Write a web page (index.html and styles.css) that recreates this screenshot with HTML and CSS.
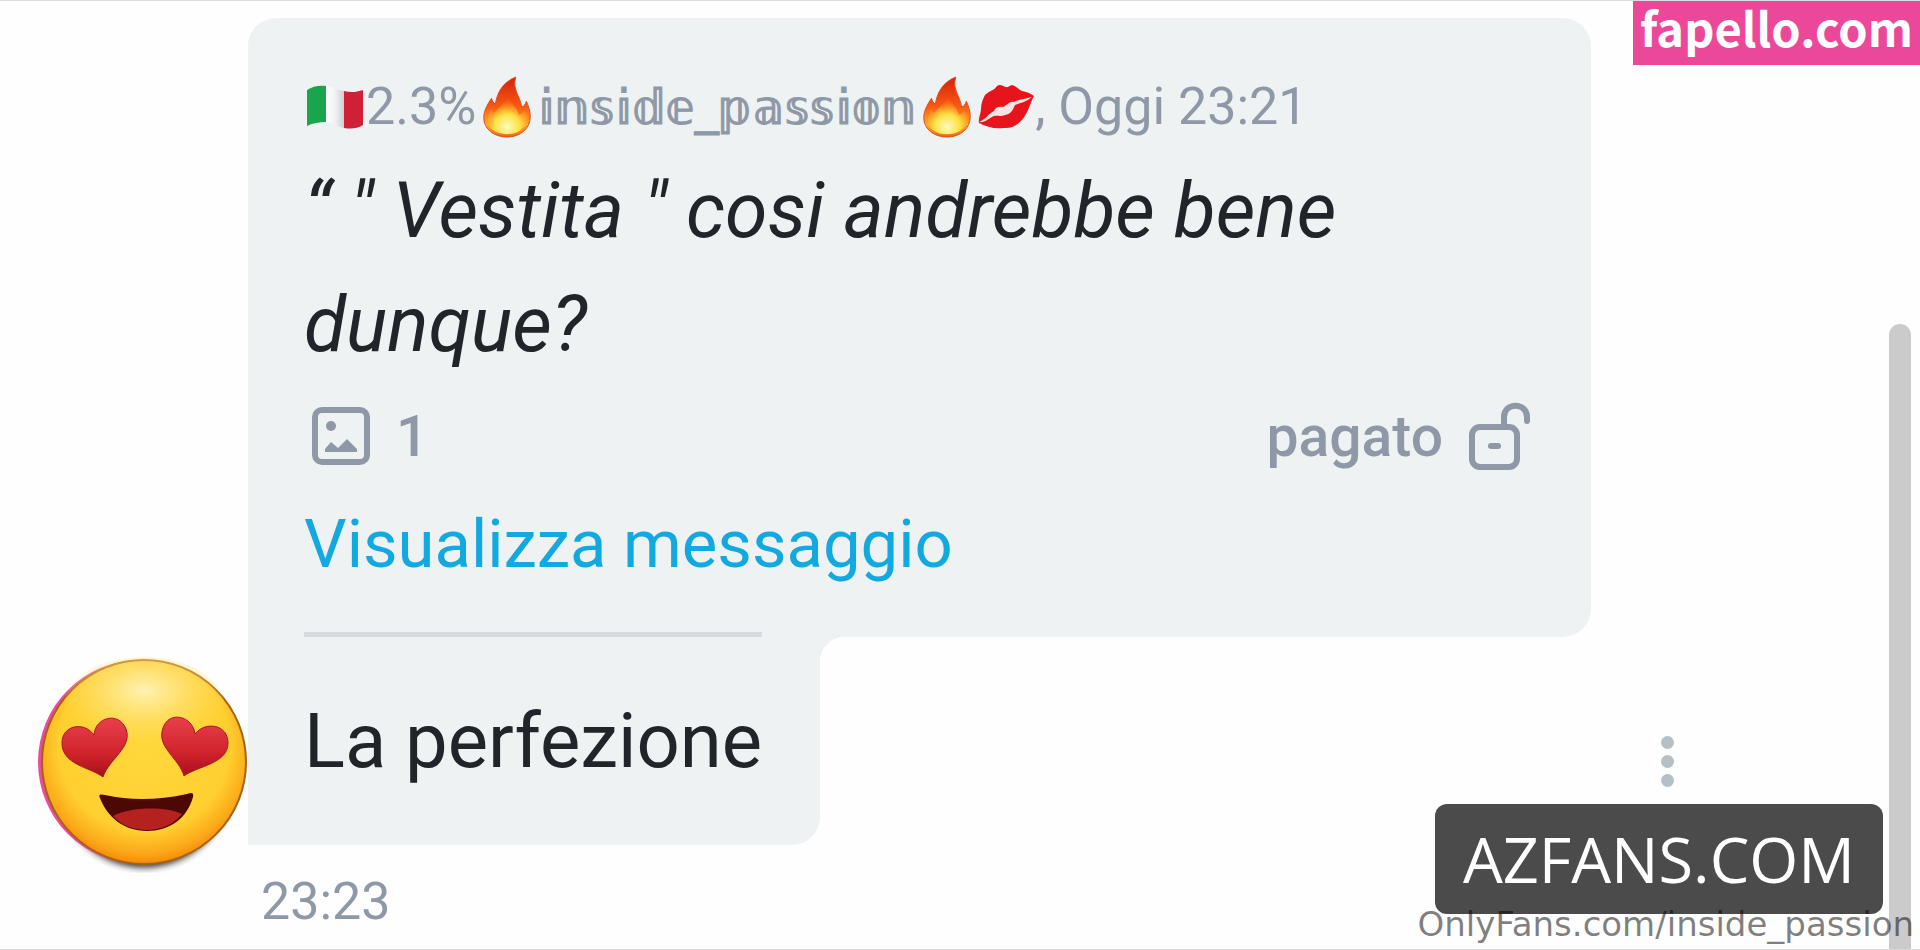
FILE: index.html
```
<!DOCTYPE html>
<html lang="it">
<head>
    <meta charset="UTF-8">
    <meta name="viewport" content="width=device-width, initial-scale=1.0">
    <title>Messaggi</title>
    <link rel="stylesheet" href="styles.css">
</head>
<body>
    <svg class="defs" width="0" height="0" aria-hidden="true">
        <defs>
            <linearGradient id="flameOuter" x1="0" y1="0" x2="0" y2="1">
                <stop offset="0" stop-color="#d5200c"/>
                <stop offset="0.5" stop-color="#fa5a12"/>
                <stop offset="0.8" stop-color="#fdae2c"/>
                <stop offset="1" stop-color="#e8641c"/>
            </linearGradient>
            <radialGradient id="flameInner" cx="0.5" cy="0.8" r="0.75">
                <stop offset="0" stop-color="#fffbc0"/>
                <stop offset="0.45" stop-color="#ffe040"/>
                <stop offset="1" stop-color="#fb7a14" stop-opacity="0"/>
            </radialGradient>
            <symbol id="fire" viewBox="0 0 50 64">
                <path d="M34 1C20 7 15 17 13 29C11 28 10 26 9 23C5 29 1 36 1 43C1 55 12 63 25 63C39 63 49 54 49 42C49 36 47 31 45 26C44 29 43 31 40 32C39 21 30 14 34 1Z" fill="url(#flameOuter)" stroke="#e2491f" stroke-width="1"/>
                <path d="M26 21C23 29 15 33 12 38C10 37 9 36 9 34C0 48 8 60 25 60C42 60 49 48 43 35C42 38 40 40 37 40C36 32 29 29 26 21Z" fill="url(#flameInner)"/>
            </symbol>
        </defs>
    </svg>

    <main class="chat">
        <div class="message">
            <svg class="avatar" viewBox="0 0 210 216" role="img" aria-label="Faccina con occhi a cuore">
                <defs>
                    <radialGradient id="face" cx="0.5" cy="0.42" r="0.6">
                        <stop offset="0" stop-color="#ffd83c"/>
                        <stop offset="0.7" stop-color="#ffcf30"/>
                        <stop offset="0.88" stop-color="#fba818"/>
                        <stop offset="1" stop-color="#f57c00"/>
                    </radialGradient>
                    <radialGradient id="shine" cx="0.5" cy="0.35" r="0.55">
                        <stop offset="0" stop-color="#fff3b4"/>
                        <stop offset="1" stop-color="#ffe070" stop-opacity="0"/>
                    </radialGradient>
                    <linearGradient id="heart" x1="0" y1="0" x2="0" y2="1">
                        <stop offset="0" stop-color="#e8404c"/>
                        <stop offset="0.6" stop-color="#d0232c"/>
                        <stop offset="1" stop-color="#a8101a"/>
                    </linearGradient>
                    <filter id="soft" x="-20%" y="-20%" width="140%" height="140%">
                        <feGaussianBlur stdDeviation="3"/>
                    </filter>
                </defs>
                <ellipse cx="106" cy="113" rx="92" ry="98" fill="#222" opacity="0.85" filter="url(#soft)"/>
                <circle cx="102" cy="105" r="102" fill="#ea4aa0"/>
                <circle cx="106" cy="105" r="102" fill="url(#face)" stroke="#a86212" stroke-width="2"/>
                <ellipse cx="106" cy="48" rx="80" ry="48" fill="url(#shine)"/>
                <path d="M65 120C52 110 24 108 24 86C24 68 46 64 56 78C57 60 81 54 88 72C95 90 71 102 65 120Z" fill="url(#heart)" stroke="#a81820" stroke-width="1"/>
                <path d="M146 119C159 109 190 107 190 86C190 67 167 64 157 77C155 59 131 53 125 71C118 90 141 101 146 119Z" fill="url(#heart)" stroke="#a81820" stroke-width="1"/>
                <path d="M62 141C60 137 63 137 67 138C93 144 121 143 149 137C154 135 156 136 155 140C149 162 131 174 109 174C86 174 69 160 62 141Z" fill="#4c0805"/>
                <path d="M75 159C91 150 127 149 144 157C135 168 123 173 109 173C95 173 83 168 75 159Z" fill="#b5211f"/>
            </svg>

            <div class="bubble">
                <article class="quote">
                    <p class="quote-author">
                        <svg class="flag" viewBox="0 0 58 44" role="img" aria-label="Italia">
                            <defs>
                                <linearGradient id="flagWhite" x1="0" y1="0" x2="1" y2="0">
                                    <stop offset="0" stop-color="#ffffff"/>
                                    <stop offset="0.5" stop-color="#f2f2f2"/>
                                    <stop offset="1" stop-color="#cfcfcf"/>
                                </linearGradient>
                            </defs>
                            <path d="M1 5C7 1 13 0 20 1V37C13 37 7 38 1 41Z" fill="#18a54b"/>
                            <path d="M20 1C27 2 32 5 38 6V43C32 42 27 38 20 37Z" fill="url(#flagWhite)"/>
                            <path d="M38 6C45 8 51 7 57 5V40C51 44 44 44 38 43Z" fill="#cf2035"/>
                        </svg><span>2.3%</span><svg class="fire" role="img" aria-label="Fuoco"><use href="#fire"/></svg><span class="double">𝕚𝕟𝕤𝕚𝕕𝕖_𝕡𝕒𝕤𝕤𝕚𝕠𝕟</span><svg class="fire" role="img" aria-label="Fuoco"><use href="#fire"/></svg><svg class="kiss" viewBox="0 0 58 48" role="img" aria-label="Bacio">
                            <path d="M8 12C13 7 17 8 20 3C24 0 27 5 31 4C36 0 39 4 43 7C47 9 52 9 57 13C54 18 53 24 49 31C44 40 37 46 26 45C17 46 10 44 2 40C1 35 4 31 4 26C4 20 6 16 8 12Z" fill="#e8141c"/>
                            <path d="M2 39C8 37 11 31 17 28C18 24 23 23 26 24C31 22 32 18 37 19C42 16 49 16 55 14C49 19 43 20 38 22C36 27 34 31 28 32C24 34 20 32 17 33C12 35 8 40 2 39Z" fill="#f6e3e4"/>
                        </svg><span>, Oggi 23:21</span>
                    </p>
                    <blockquote class="quote-text">“ " Vestita " cosi andrebbe bene dunque?</blockquote>
                    <div class="quote-meta">
                        <span class="media">
                            <svg class="icon" viewBox="0 0 58 58" role="img" aria-label="Immagini">
                                <rect x="3" y="3" width="52" height="52" rx="7" fill="none" stroke="currentColor" stroke-width="6"/>
                                <circle cx="19" cy="19" r="5" fill="currentColor"/>
                                <path d="M13 45V42L19 35L26 41L35 32L45 42V45Z" fill="currentColor"/>
                            </svg>
                            1
                        </span>
                        <span class="paid">
                            pagato
                            <svg class="lock" viewBox="0 0 62 68" role="img" aria-label="Sbloccato">
                                <rect x="3" y="25" width="45" height="40" rx="8" fill="none" stroke="currentColor" stroke-width="6"/>
                                <path d="M35 25V15C35 0 58 0 58 15V19" fill="none" stroke="currentColor" stroke-width="6" stroke-linecap="round"/>
                                <path d="M22 44H29" stroke="currentColor" stroke-width="6" stroke-linecap="round"/>
                            </svg>
                        </span>
                    </div>
                    <a class="quote-link" href="#">Visualizza messaggio</a>
                </article>
                <div class="reply">
                    <p class="reply-text">La perfezione</p>
                </div>
                <time class="time">23:23</time>
            </div>

            <button type="button" class="menu" aria-label="Altro">
                <span></span><span></span><span></span>
            </button>
        </div>
    </main>

    <div class="scroll-thumb"></div>
    <div class="site-tag">fapello.com</div>
    <div class="site-badge">AZFANS.COM</div>
    <div class="watermark">OnlyFans.com/inside_passion</div>
</body>
</html>
```
FILE: styles.css
```
* {
    box-sizing: border-box;
}
body {
    position: relative;
    min-height: 100vh;
    margin: 0;
    font-family: Roboto, sans-serif;
    background-color: #fefefe;
    color: #212529;
    border-top: 1px solid #dcdcdc;
    border-bottom: 1px solid #dcdcdc;
}
p, blockquote {
    margin: 0;
}
.defs {
    position: absolute;
}
.chat {
    padding: 17px 329px 0 38px;
}
.message {
    display: flex;
    align-items: flex-end;
}
.avatar {
    flex: none;
    width: 210px;
    height: 216px;
    margin-bottom: 64px;
}
.bubble {
    flex: 1;
}
.quote {
    padding: 54px 60px 43px 56px;
    background-color: #eef2f3;
    border-radius: 28px 28px 28px 0;
}
.quote-author {
    display: flex;
    align-items: center;
    height: 70px;
    font-size: 52px;
    line-height: 70px;
    color: #8f98a6;
    white-space: pre;
}
.double {
    font-family: "DejaVu Sans", sans-serif;
    font-size: 48px;
    -webkit-text-stroke: 1px #8f98a6;
}
.flag {
    width: 62px;
    height: 44px;
}
.fire {
    width: 50px;
    height: 62px;
    margin: 0 5px 0 6px;
}
.kiss {
    width: 58px;
    height: 48px;
}
.quote-text {
    margin-top: 12px;
    font-size: 77px;
    font-style: italic;
    line-height: 114px;
}
.quote-meta {
    display: flex;
    justify-content: space-between;
    align-items: center;
    height: 80px;
    margin-top: 14px;
    padding-left: 8px;
    font-size: 57px;
    font-weight: 500;
    color: #8f98a6;
}
.media, .paid {
    display: flex;
    align-items: center;
    gap: 26px;
}
.icon {
    width: 58px;
    height: 58px;
}
.lock {
    width: 62px;
    height: 68px;
}
.quote-link {
    display: block;
    width: fit-content;
    margin-top: 18px;
    font-size: 67px;
    line-height: 100px;
    color: #12a8e0;
    text-decoration: none;
}
.reply {
    position: relative;
    width: fit-content;
    margin-top: -5px;
    padding: 0 58px 0 56px;
    background-color: #eef2f3;
    border-radius: 0 0 28px 0;
}
/* inner corner between the quote and the reply */
.reply::after {
    content: "";
    position: absolute;
    top: 5px;
    left: 100%;
    width: 24px;
    height: 24px;
    background: radial-gradient(circle at 100% 100%, transparent 24px, #eef2f3 24px);
}
.reply-text {
    padding: 50px 0;
    border-top: 5px solid #d5dade;
    font-size: 76px;
    line-height: 108px;
}
.time {
    display: block;
    margin-top: 22px;
    padding-left: 13px;
    font-size: 52px;
    line-height: 70px;
    color: #8f98a6;
}
.menu {
    position: absolute;
    right: 240px;
    bottom: 158px;
    display: flex;
    flex-direction: column;
    align-items: center;
    gap: 6px;
    padding: 4px 6px;
    background: none;
    border: none;
    cursor: pointer;
}
.menu span {
    width: 13px;
    height: 13px;
    border-radius: 50%;
    background-color: #b5c0c6;
}
.scroll-thumb {
    position: absolute;
    top: 323px;
    right: 9px;
    bottom: 0;
    width: 22px;
    background-color: #cbcbcb;
    border-radius: 11px 11px 0 0;
}
.site-tag {
    position: absolute;
    top: -1px;
    right: 0;
    padding: 0 7px 11px;
    background-color: #ec4899;
    color: white;
    font-family: "Noto Sans CJK SC", sans-serif;
    font-size: 47px;
    font-weight: 700;
    line-height: 54px;
}
.site-badge {
    position: absolute;
    right: 37px;
    bottom: 35px;
    padding: 0 28px;
    background-color: #4b4b4b;
    border-radius: 12px;
    color: white;
    font-family: "Open Sans", sans-serif;
    font-size: 63px;
    line-height: 110px;
}
.watermark {
    position: absolute;
    right: 6px;
    bottom: 3px;
    font-family: "DejaVu Sans", sans-serif;
    font-size: 34px;
    line-height: 44px;
    color: rgba(0, 0, 0, 0.5);
}
```
